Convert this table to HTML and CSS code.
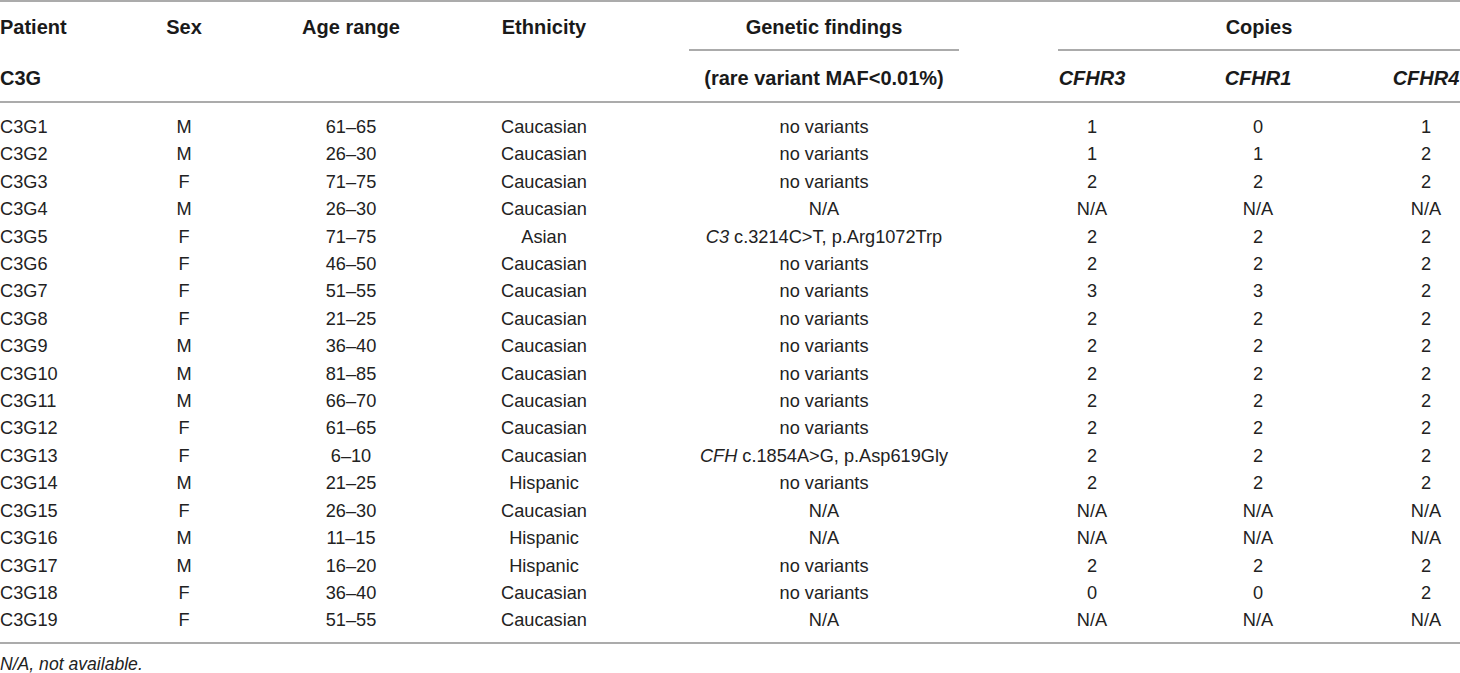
FILE: index.html
```html
<!DOCTYPE html>
<html>
<head>
<meta charset="utf-8">
<link rel="stylesheet" href="styles.css">
</head>
<body>
<div class="wrap">
<table class="tbl">
  <colgroup>
    <col class="c1"><col class="c2"><col class="c3"><col class="c4"><col class="c5"><col class="c6"><col class="c7"><col class="c8">
  </colgroup>
  <thead>
    <tr class="h1">
      <th class="left">Patient</th>
      <th>Sex</th>
      <th>Age range</th>
      <th>Ethnicity</th>
      <th class="grpcell"><div class="grp grp-gen">Genetic findings</div></th>
      <th class="grpcell" colspan="3"><div class="grp grp-cop">Copies</div></th>
    </tr>
    <tr class="h2">
      <th class="left">C3G</th>
      <th></th>
      <th></th>
      <th></th>
      <th>(rare variant MAF&lt;0.01%)</th>
      <th><i>CFHR3</i></th>
      <th><i>CFHR1</i></th>
      <th class="last"><i>CFHR4</i></th>
    </tr>
  </thead>
  <tbody>
    <tr class="first"><td class="left">C3G1</td><td>M</td><td>61–65</td><td>Caucasian</td><td>no variants</td><td>1</td><td>0</td><td class="last">1</td></tr>
    <tr><td class="left">C3G2</td><td>M</td><td>26–30</td><td>Caucasian</td><td>no variants</td><td>1</td><td>1</td><td class="last">2</td></tr>
    <tr><td class="left">C3G3</td><td>F</td><td>71–75</td><td>Caucasian</td><td>no variants</td><td>2</td><td>2</td><td class="last">2</td></tr>
    <tr><td class="left">C3G4</td><td>M</td><td>26–30</td><td>Caucasian</td><td>N/A</td><td>N/A</td><td>N/A</td><td class="last">N/A</td></tr>
    <tr><td class="left">C3G5</td><td>F</td><td>71–75</td><td>Asian</td><td><i>C3</i> c.3214C&gt;T, p.Arg1072Trp</td><td>2</td><td>2</td><td class="last">2</td></tr>
    <tr><td class="left">C3G6</td><td>F</td><td>46–50</td><td>Caucasian</td><td>no variants</td><td>2</td><td>2</td><td class="last">2</td></tr>
    <tr><td class="left">C3G7</td><td>F</td><td>51–55</td><td>Caucasian</td><td>no variants</td><td>3</td><td>3</td><td class="last">2</td></tr>
    <tr><td class="left">C3G8</td><td>F</td><td>21–25</td><td>Caucasian</td><td>no variants</td><td>2</td><td>2</td><td class="last">2</td></tr>
    <tr><td class="left">C3G9</td><td>M</td><td>36–40</td><td>Caucasian</td><td>no variants</td><td>2</td><td>2</td><td class="last">2</td></tr>
    <tr><td class="left">C3G10</td><td>M</td><td>81–85</td><td>Caucasian</td><td>no variants</td><td>2</td><td>2</td><td class="last">2</td></tr>
    <tr><td class="left">C3G11</td><td>M</td><td>66–70</td><td>Caucasian</td><td>no variants</td><td>2</td><td>2</td><td class="last">2</td></tr>
    <tr><td class="left">C3G12</td><td>F</td><td>61–65</td><td>Caucasian</td><td>no variants</td><td>2</td><td>2</td><td class="last">2</td></tr>
    <tr><td class="left">C3G13</td><td>F</td><td>6–10</td><td>Caucasian</td><td><i>CFH</i> c.1854A&gt;G, p.Asp619Gly</td><td>2</td><td>2</td><td class="last">2</td></tr>
    <tr><td class="left">C3G14</td><td>M</td><td>21–25</td><td>Hispanic</td><td>no variants</td><td>2</td><td>2</td><td class="last">2</td></tr>
    <tr><td class="left">C3G15</td><td>F</td><td>26–30</td><td>Caucasian</td><td>N/A</td><td>N/A</td><td>N/A</td><td class="last">N/A</td></tr>
    <tr><td class="left">C3G16</td><td>M</td><td>11–15</td><td>Hispanic</td><td>N/A</td><td>N/A</td><td>N/A</td><td class="last">N/A</td></tr>
    <tr><td class="left">C3G17</td><td>M</td><td>16–20</td><td>Hispanic</td><td>no variants</td><td>2</td><td>2</td><td class="last">2</td></tr>
    <tr><td class="left">C3G18</td><td>F</td><td>36–40</td><td>Caucasian</td><td>no variants</td><td>0</td><td>0</td><td class="last">2</td></tr>
    <tr class="final"><td class="left">C3G19</td><td>F</td><td>51–55</td><td>Caucasian</td><td>N/A</td><td>N/A</td><td>N/A</td><td class="last">N/A</td></tr>
  </tbody>
</table>
<p class="note">N/A, not available.</p>
</div>
</body>
</html>
```

FILE: styles.css
```css
html, body {
  margin: 0;
  padding: 0;
  background: #ffffff;
}
body {
  font-family: "Liberation Sans", Arial, sans-serif;
  color: #222222;
}
.wrap {
  width: 1460px;
}
.tbl {
  width: 1460px;
  border-collapse: collapse;
  table-layout: fixed;
  border-top: 2px solid #ababab;
  border-bottom: 2px solid #ababab;
}
.c1 { width: 120px; }
.c2 { width: 128px; }
.c3 { width: 206px; }
.c4 { width: 180px; }
.c5 { width: 380px; }
.c6 { width: 156px; }
.c7 { width: 176px; }
.c8 { width: 114px; }

.tbl th, .tbl td {
  padding: 0;
  text-align: center;
  white-space: nowrap;
}
.tbl th {
  font-weight: bold;
  font-size: 20px;
  color: #1a1a1a;
}
.tbl .left {
  text-align: left;
}
.tbl .last {
  padding-left: 46px;
}
.h1 th {
  height: 47px;
  padding-top: 2px;
  vertical-align: middle;
}
.h1 th.grpcell {
  padding-top: 0;
  height: 49px;
}
.grp {
  height: 49px;
  padding-top: 2px;
  line-height: 47px;
  border-bottom: 2px solid #ababab;
  box-sizing: border-box;
}
.grp-gen {
  margin: 0 55px;
}
.grp-cop {
  margin-left: 44px;
}
.h2 th {
  height: 45px;
  padding-top: 5px;
  vertical-align: middle;
  border-bottom: 2px solid #ababab;
}
.tbl td {
  font-size: 18.2px;
  height: 27.4px;
  line-height: 27.4px;
  vertical-align: middle;
}
.tbl tr.first td {
  padding-top: 11px;
}
.tbl tr.final td {
  padding-bottom: 7px;
}
.note {
  margin: 10px 0 0 0;
  font-size: 17.6px;
  font-style: italic;
  color: #222222;
}
```
